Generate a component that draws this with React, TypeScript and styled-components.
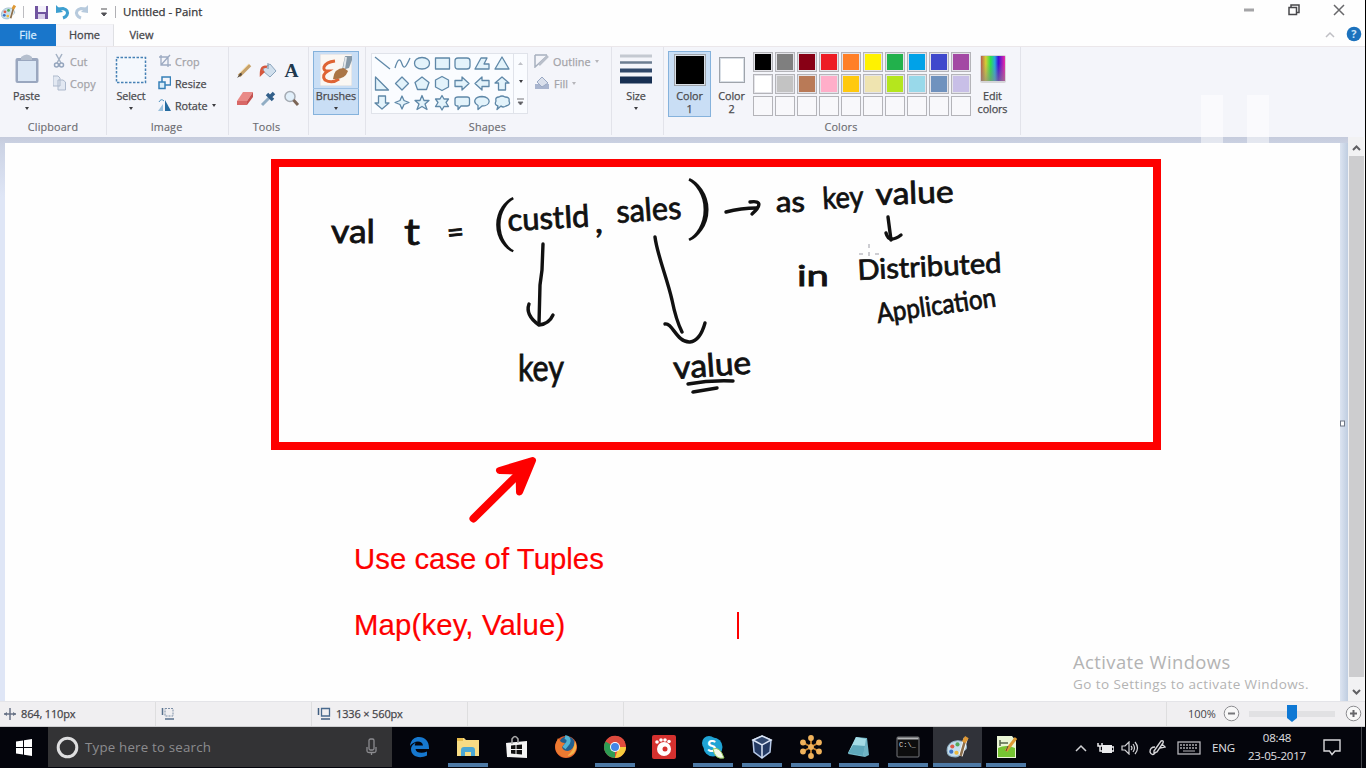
import React from "react";
import styled, { createGlobalStyle, css } from "styled-components";

const Global = createGlobalStyle`
  * { box-sizing: border-box; }
  body { margin: 0; background: #000; overflow: hidden; }
  svg { display: block; flex: none; }
`;

const ui = css`
  font-family: "Open Sans", "Noto Sans", sans-serif;
`;

const Screen = styled.div`
  ${ui}
  position: relative;
  width: 1366px;
  height: 768px;
  display: flex;
  flex-direction: column;
  background: #000;
  color: #4a4a4e;
  font-size: 11px;
  overflow: hidden;
`;
const AppWindow = styled.div`
  width: 1365px;
  height: 727px;
  display: flex;
  flex-direction: column;
  background: #fefefe;
`;
const TitleBar = styled.header`
  height: 24px;
  display: flex;
  align-items: center;
  justify-content: space-between;
  padding-right: 20px;
`;
const QuickAccess = styled.div`
  display: flex;
  align-items: center;
`;
const Title = styled.span`
  font-size: 11.4px;
  color: #37373a;
  letter-spacing: 0;
  margin-left: 5px;
  line-height: 24px;
  -webkit-text-stroke: 0.25px;
`;
const WindowButtons = styled.div`
  display: flex;
  gap: 33px;
  align-items: center;
  padding-bottom: 4px;
`;
const Tabs = styled.nav`
  height: 22px;
  display: flex;
  align-items: stretch;
`;
const Tab = styled.div<{ $w: number; $kind?: "file" | "active" }>`
  width: ${(p) => p.$w}px;
  text-align: center;
  line-height: ${(p) => (p.$kind === "active" ? 20 : 22)}px;
  font-size: 11px;
  color: ${(p) => (p.$kind === "file" ? "#d6ecff" : "#47474b")};
  background: ${(p) => (p.$kind === "file" ? "#1976cb" : p.$kind === "active" ? "#f5f5fa" : "transparent")};
  border-right: ${(p) => (p.$kind === "active" ? "1px solid #dfe0e4" : "0")};
  border-top: ${(p) => (p.$kind === "active" ? "1px solid #f0f0f3" : "0")};
  -webkit-text-stroke: 0.3px;
`;
const TabsEnd = styled.div`
  flex: 1;
  display: flex;
  justify-content: flex-end;
  align-items: center;
  gap: 11px;
  padding-right: 3px;
`;
const Ribbon = styled.section`
  height: 91px;
  display: flex;
  background: #f4f5fa;
  border-top: 1px solid #ebe7ea;
`;
const Group = styled.div<{ $w: number }>`
  width: ${(p) => p.$w}px;
  border-right: 1px solid #e2e3ea;
  display: flex;
  flex-direction: column;
  padding-top: 4px;
  height: 88px;
`;
const GroupBody = styled.div<{ $pl?: number; $gap?: number }>`
  height: 70px;
  display: flex;
  align-items: flex-start;
  padding-left: ${(p) => p.$pl ?? 0}px;
  gap: ${(p) => p.$gap ?? 0}px;
`;
const GroupLabel = styled.div<{ $shift?: number }>`
  text-align: center;
  line-height: 16px;
  font-size: 10.8px;
  letter-spacing: 0.15px;
  color: #6b6b70;
  padding-right: ${(p) => p.$shift ?? 0}px;
  -webkit-text-stroke: 0.15px;
`;
const BigButton = styled.div<{ $w: number; $selected?: boolean; $h?: number }>`
  width: ${(p) => p.$w}px;
  height: ${(p) => p.$h ?? 66}px;
  display: flex;
  flex-direction: column;
  align-items: center;
  font-size: 10.8px;
  line-height: 13px;
  letter-spacing: -0.1px;
  text-align: center;
  background: ${(p) => (p.$selected ? "#c9def5" : "transparent")};
  box-shadow: ${(p) => (p.$selected ? "inset 0 0 0 1px #85b2dc" : "none")};
  -webkit-text-stroke: 0.25px;
`;
const BigIcon = styled.div<{ $line?: boolean }>`
  height: 38px;
  width: 100%;
  display: flex;
  align-items: center;
  justify-content: center;
  border-bottom: ${(p) => (p.$line ? "1px solid #9cc0e4" : "0")};
`;
const Caret = styled.i<{ $dim?: boolean; $top?: number }>`
  display: block;
  width: 0;
  height: 0;
  border: 2.5px solid transparent;
  border-bottom: 0;
  border-top: 3px solid ${(p) => (p.$dim ? "#b5b5ba" : "#3c3c40")};
  margin-top: ${(p) => p.$top ?? 0}px;
`;
const Rows = styled.div<{ $w: number }>`
  width: ${(p) => p.$w}px;
  display: flex;
  flex-direction: column;
`;
const Row = styled.div<{ $dim?: boolean }>`
  height: 22px;
  display: flex;
  align-items: center;
  gap: 4px;
  padding-bottom: 2px;
  font-size: 10.8px;
  letter-spacing: ${(p) => (p.$dim ? 0.1 : -0.05)}px;
  color: ${(p) => (p.$dim ? "#a3a3a8" : "#4a4a4e")};
  -webkit-text-stroke: 0.25px;
`;
const ToolGrid = styled.div`
  display: grid;
  grid-template-columns: repeat(3, 23.5px);
  grid-auto-rows: 28px;
  justify-items: center;
  align-items: center;
  padding-top: 5px;
`;
const Gallery = styled.div`
  width: 157px;
  height: 61px;
  margin-top: 2px;
  display: flex;
  border: 1px solid #e0e3ea;
  background: #fafcff;
`;
const GalleryCells = styled.div`
  flex: 1;
  display: grid;
  grid-template-columns: repeat(7, 20px);
  grid-template-rows: repeat(3, 19.6px);
  place-items: center;
`;
const GalleryScroll = styled.div`
  width: 14px;
  border-left: 1px solid #e0e3ea;
  display: flex;
  flex-direction: column;
  align-items: center;
  justify-content: space-around;
`;
const Swatch = styled.div<{ $size: number; $color: string }>`
  width: ${(p) => p.$size}px;
  height: ${(p) => p.$size}px;
  background: ${(p) => p.$color};
  border: 2px solid #9fa4ab;
  outline: 1px solid #d9dfe6;
  outline-offset: -2px;
`;
const Palette = styled.div`
  display: grid;
  grid-template-columns: repeat(10, 20px);
  grid-template-rows: repeat(3, 20px);
  column-gap: 2px;
  row-gap: 2px;
  padding: 1px 0 0 1px;
`;
const Chip = styled.div<{ $color?: string }>`
  border: 1px solid #b4b4b9;
  background: ${(p) => p.$color ?? "#f8f8fb"};
  box-shadow: inset 0 0 0 1px ${(p) => (p.$color ? "#e4e4e9" : "#f8f8fb")};
`;
const Work = styled.main`
  height: 564px;
  display: flex;
  background: #c9cfdf;
`;
const Desk = styled.div`
  width: 1348px;
  padding: 6px 8px 0 5px;
  background: linear-gradient(#c5cbdc, #ccd3e4 8px, #dfe6f6 60px);
  display: flex;
`;
const Edge = styled.div`
  width: 8px;
  margin-right: -8px;
  background: linear-gradient(90deg, #dce4f1, #bfcde0);
`;
const Canvas = styled.div`
  position: relative;
  width: 1335px;
  height: 558px;
  background: #fefefe;
`;
const Ink = styled.svg`
  position: absolute;
  left: -5px;
  top: -143px;
`;
const TextBox = styled.div`
  position: absolute;
  left: 349px;
  top: 399px;
  width: 385px;
  font: 29.3px/33px "Liberation Sans", Arial, sans-serif;
  color: #fe0000;
  white-space: nowrap;
  display: flex;
  flex-direction: column;
  gap: 33px;
  -webkit-text-stroke: 0.2px;
`;
const TextLine = styled.div<{ $track?: number }>`
  display: flex;
  justify-content: space-between;
  letter-spacing: ${(p) => p.$track ?? 0}px;
`;
const TextCursor = styled.i`
  width: 2px;
  height: 27px;
  margin-top: 4px;
  background: #fe0000;
`;
const Watermark = styled.div`
  position: absolute;
  left: 1068px;
  top: 506px;
  color: #b3b3b3;
  white-space: nowrap;
`;
const WatermarkTitle = styled.div`
  font-size: 18.4px;
  line-height: 26px;
  letter-spacing: 0.42px;
`;
const WatermarkText = styled.div`
  font-size: 13.5px;
  line-height: 19px;
  letter-spacing: 0.42px;
`;
const ScrollBar = styled.div`
  width: 17px;
  background: #f2f2f3;
  display: flex;
  flex-direction: column;
  align-items: center;
  padding: 7px 0 5px;
  justify-content: space-between;
  border-right: 1px solid #fafafa;
`;
const ScrollThumb = styled.div`
  width: 15px;
  height: 521px;
  background: #cdcdcf;
  margin-bottom: 7px;
`;
const StatusBar = styled.footer`
  height: 26px;
  display: flex;
  background: #f0eff1;
  border-top: 1px solid #e4e4e8;
  border-bottom: 1px solid #cfcfd1;
`;
const StatusCell = styled.div<{ $w?: number; $pl: number }>`
  ${(p) => (p.$w ? `width: ${p.$w}px;` : "flex: 1;")}
  padding-left: ${(p) => p.$pl}px;
  padding-bottom: 1px;
  display: flex;
  align-items: center;
  gap: 5px;
  border-right: 1px solid #dededf;
  font-size: 11px;
  letter-spacing: -0.15px;
  color: #45454a;
  -webkit-text-stroke: 0.25px;
`;
const Zoom = styled.div`
  width: 198px;
  display: flex;
  align-items: center;
  padding-left: 21px;
  padding-bottom: 1px;
  font-size: 11px;
  letter-spacing: 0;
  color: #45454a;
`;
const ZoomLabel = styled.span`
  width: 35px;
`;
const Slider = styled.div`
  width: 86px;
  height: 6px;
  margin: 0 10px 0 9px;
  background: #e1e1e3;
  display: flex;
  justify-content: center;
  align-items: center;
`;
const Taskbar = styled.div`
  height: 41px;
  display: flex;
  background: #04050c;
  color: #fff;
`;
const Start = styled.div`
  width: 48px;
  padding-left: 16px;
  display: flex;
  align-items: center;
`;
const Search = styled.div`
  width: 344px;
  height: 40px;
  background: #333335;
  display: flex;
  align-items: center;
  padding: 0 15px 0 8px;
  color: #8c8c8f;
  font-size: 13.3px;
  letter-spacing: 0.2px;
`;
const SearchText = styled.span`
  flex: 1;
  padding-left: 6px;
`;
const Tasks = styled.div`
  display: flex;
  padding-left: 3px;
`;
const Task = styled.div<{ $open?: boolean; $active?: boolean }>`
  width: 48.9px;
  height: 40px;
  display: flex;
  flex-direction: column;
  align-items: center;
  justify-content: space-between;
  padding-top: 8px;
  background: ${(p) => (p.$active ? "#303239" : "transparent")};
  &::after {
    content: "";
    width: ${(p) => (p.$active ? 48 : 40)}px;
    height: 4px;
    background: ${(p) => (p.$open ? "#4d79a5" : "transparent")};
  }
`;
const Tray = styled.div`
  flex: 1;
  display: flex;
  align-items: center;
  justify-content: flex-end;
  padding-right: 4px;
`;
const TrayItem = styled.div<{ $w: number }>`
  width: ${(p) => p.$w}px;
  display: flex;
  justify-content: center;
  font-size: 11.5px;
  letter-spacing: -0.2px;
  color: #e0e0e4;
`;
const Clock = styled.div`
  width: 70px;
  margin-right: 3px;
  text-align: center;
  font-size: 11.5px;
  line-height: 18px;
  padding-bottom: 2px;
  letter-spacing: -0.2px;
  color: #e0e0e4;
`;
const TrayEnd = styled.div`
  width: 1px;
  height: 41px;
  background: #44454b;
  margin-left: 12px;
`;
const PauseMark = styled.div`
  position: absolute;
  left: 1201px;
  top: 95px;
  display: flex;
  gap: 24px;
`;
const PauseBar = styled.i`
  width: 22px;
  height: 49px;
  background: rgba(255, 255, 255, 0.5);
`;

const colors = [
  "#000000", "#7f7f7f", "#880015", "#ed1c24", "#ff7f27", "#fff200", "#22b14c", "#00a2e8", "#3f48cc", "#a349a4",
  "#ffffff", "#c3c3c3", "#b97a57", "#ffaec9", "#ffc90e", "#efe4b0", "#b5e61d", "#99d9ea", "#7092be", "#c8bfe7",
];

const shapes = [
  "M2 2L17 14", "M2 13C5 3 7 3 9 9S13 12 17 3", "M9 2.5C19 2.5 19 14 9 14S-1 2.5 9 2.5Z", "M2.5 3H16.5V14H2.5Z",
  "M5 3H14Q17 3 17 6V11Q17 14 14 14H5Q2 14 2 11V6Q2 3 5 3Z", "M2 14L8 3H14L11 9H16V14Z", "M9 2L16 14H2Z",
  "M2.5 2V15H15.5Z", "M9 2L15.5 8.5L9 15L2.5 8.5Z", "M9 2L16 7.5L13.5 14.5H4.5L2 7.5Z", "M9 1.5L15.5 5V12L9 15.5L2.5 12V5Z",
  "M2 5.5H9V2L16 8.5L9 15V11.5H2Z", "M16 5.5H9V2L2 8.5L9 15V11.5H16Z", "M5.5 15V8H2L9 2L16 8H12.5V15Z",
  "M5.5 2V9H2L9 15L16 9H12.5V2Z", "M9 2L11 6.5L16 8.5L11 10.5L9 15L7 10.5L2 8.5L7 6.5Z",
  "M9 1.5L11 6.5H16L12 10L14 15.5L9 12.5L4 15.5L6 10L2 6.5H7Z", "M9 1.5L11 5H15.5L13 8.5L15.5 12.5H11L9 16L7 12.5H2.5L5 8.5L2.5 5H7Z",
  "M5 3H14Q16.5 3 16.5 5V10Q16.5 12 14 12H8L5 15.5V12Q2 12 2 10V5Q2 3 5 3Z", "M9 2.5C19 3 18 12 9 12L5 15.5V11.5C-1 8 2 2.5 9 2.5Z",
  "M6 3Q9 1 12 3Q17 3 16 7Q18 11 13 12Q10 14 8 12L4 15.5L5 12Q1 11 3 7Q2 3 6 3Z",
];

const Svg = ({ w, h, children, vb }: { w: number; h: number; vb?: string; children: React.ReactNode }) => (
  <svg width={w} height={h} viewBox={vb ?? `0 0 ${w} ${h}`} fill="none">{children}</svg>
);

const PaletteIcon = ({ s }: { s: number }) => (
  <Svg w={s} h={s} vb="0 0 24 24">
    <path d="M2 15C2 8 9 4 16 6C22 8 22 15 17 15C14 15 16 21 10 21C5 21 2 19 2 15Z" fill="#c5dfee" stroke="#92b2c5" />
    <circle cx="7" cy="11" r="2" fill="#de5a48" /><circle cx="12" cy="9" r="2" fill="#55a85a" />
    <circle cx="6" cy="16" r="2" fill="#3d72c4" /><circle cx="11" cy="17" r="2" fill="#ecb83b" />
    <path d="M15 20L20 3" stroke="#fff" strokeWidth="4" /><path d="M15 20L19 6" stroke="#8c704e" strokeWidth="2.5" />
    <path d="M18 7L21 2" stroke="#df9834" strokeWidth="4" />
  </Svg>
);

const taskIcons = [
  { open: false, icon: <Svg w={24} h={24}><path d="M3 11C4 4 8 2 12 2C18 2 22 6 22 13V14H8.500C9 18 15 19 20 16.500V20.500C12 24.500 4 21 4 14C4 11 6 9 9 7.500C8 8.500 7.800 9.500 7.800 10.500H16C15.500 5 7 5 3 11Z" fill="#1678cf" /></Svg> },
  { open: true, icon: <Svg w={24} h={24}><path d="M1 3H8L10 5H23V21H1Z" fill="#f8dc84" /><path d="M1 3H7V6H1Z" fill="#e8bc4d" /><path d="M5 21V15Q5 12 8 12H16Q19 12 19 15V21H15V17H9V21Z" fill="#4ba8d5" /></Svg> },
  { open: false, icon: <Svg w={24} h={24}><path d="M1 8L22 6V23L2 22Z" fill="#f5f5f5" /><path d="M7 9V4Q10-1 13 4V8" stroke="#aaa" strokeWidth="1.500" /><path d="M6 10.500L10.500 10V14H6ZM11.500 10L17 9.500V14H11.500ZM6 15H10.500V19L6 18.500ZM11.500 15H17V19.500L11.500 19Z" fill="#111" /></Svg> },
  { open: false, icon: <Svg w={24} h={24}><circle cx="12" cy="12" r="11" fill="#dd5a2a" /><circle cx="13" cy="9.500" r="8" fill="#23608f" /><path d="M11 2Q16 3 14 8L10 13" stroke="#52b4d3" strokeWidth="4" /><path d="M2 8L4 3L7 7Q9 8 11 8L8 12Q9 16 14 16Q20 15 21 6Q24 13 20 19Q12 26 4 19Q0 14 2 8Z" fill="#ec7a31" /><path d="M21 6Q24 13 20 18Q17 21 13 21Q20 16 21 6Z" fill="#f5b34b" /></Svg> },
  { open: true, icon: <Svg w={24} h={24}><circle cx="12" cy="12" r="11" fill="#e04a3d" /><path d="M12 12L2.500 6.500A11 11 0 0 0 12 23Z" fill="#2e9c54" /><path d="M12 12H23A11 11 0 0 1 12 23L15 14Z" fill="#f6cc3d" /><path d="M2.500 6.500A11 11 0 0 1 22 7H12Z" fill="#dd4b3e" /><circle cx="12" cy="12" r="5" fill="#fff" /><circle cx="12" cy="12" r="4" fill="#4486e6" /></Svg> },
  { open: false, icon: <Svg w={24} h={24}><rect width="24" height="24" rx="2" fill="#d5312f" /><circle cx="12" cy="14" r="7" fill="#fff" /><circle cx="13" cy="14" r="2.500" fill="#d5312f" /><circle cx="5" cy="7" r="1.800" fill="#fff" /><circle cx="9" cy="5" r="1.800" fill="#fff" /><circle cx="13" cy="5" r="1.800" fill="#fff" /><circle cx="17" cy="6.500" r="1.800" fill="#fff" /></Svg> },
  { open: true, icon: <Svg w={24} h={24}><circle cx="8" cy="8" r="7" fill="#20a4d5" /><circle cx="12" cy="12" r="9.500" fill="#20a4d5" /><text x="6" y="17" fontFamily="Lato, sans-serif" fontWeight="700" fontSize="17" fill="#fff">S</text><path d="M12 14Q19 11 23 23Q14 25 12 14Z" fill="#f2fae8" stroke="#97c95d" /></Svg> },
  { open: true, icon: <Svg w={24} h={24}><path d="M12 1L21 5L20 17L12 23L4 17L3 5Z" fill="#243a63" stroke="#b7c9e8" strokeWidth="1.500" /><path d="M3 5L12 10L21 5L12 1ZM12 10V23" fill="#31486f" stroke="#dce6f6" strokeWidth="1.500" /></Svg> },
  { open: true, icon: <Svg w={24} h={24}><path d="M12 3V21M4 7.500L20 16.500M4 16.500L20 7.500" stroke="#c9852e" strokeWidth="1.800" />{[[12, 3], [12, 21], [4, 7.5], [20, 16.5], [4, 16.5], [20, 7.5], [12, 12]].map(([x, y]) => <circle key={`${x}-${y}`} cx={x} cy={y} r="2.900" fill="#f0b25b" />)}</Svg> },
  { open: true, icon: <Svg w={24} h={24}><path d="M9 2L20 3L22 20L18 22L1 19Z" fill="#6fb3c4" /><path d="M9 2L19 4L16 21L1 18Z" fill="#a5dce6" /><path d="M6 10L18 11L16 21L1 18Z" fill="#5fa8bb" /></Svg> },
  { open: true, icon: <Svg w={24} h={24}><rect x="1" y="2" width="22" height="20" rx="1" fill="#0d0d0e" stroke="#77797c" /><path d="M1.500 3.500H22.500" stroke="#b2b4b7" strokeWidth="2" /><text x="3" y="12" fontFamily="Liberation Mono, monospace" fontSize="7" fill="#dedede">C:\_</text></Svg> },
  { open: true, active: true, icon: <PaletteIcon s={25} /> },
  { open: true, icon: <Svg w={24} h={24}><path d="M3 1H18L22 6V23H3Z" fill="#eaf5d6" /><path d="M4 13Q12 9 21 13V22H4Z" fill="#76c433" /><path d="M6 5V11M9 8H14M6 8H9" stroke="#56664a" strokeWidth="1.500" /><path d="M12 16L22 3" stroke="#dd9b35" strokeWidth="3" /><path d="M12 16L14 11" stroke="#5c4a36" /></Svg> },
];

type Word = { t: string; x: number; y: number; w: number; s: number; r?: number; thin?: boolean };
const words: Word[] = [
  { t: "val", x: 331, y: 243, w: 44, s: 33 },
  { t: "t", x: 404, y: 245, w: 16, s: 36 },
  { t: "=", x: 448, y: 243, w: 17, s: 29, r: -6 },
  { t: "(", x: 491, y: 240, w: 24, s: 54, thin: true },
  { t: "custId", x: 508, y: 231, w: 82, s: 31, r: -3 },
  { t: ",", x: 595, y: 233, w: 8, s: 33 },
  { t: "sales", x: 617, y: 223, w: 65, s: 32, r: -4 },
  { t: ")", x: 687, y: 227, w: 28, s: 61, thin: true },
  { t: "as", x: 776, y: 212, w: 29, s: 28 },
  { t: "key", x: 823, y: 209, w: 41, s: 30, r: -3 },
  { t: "value", x: 876, y: 205, w: 78, s: 31, r: -2 },
  { t: "in", x: 797, y: 286, w: 32, s: 28 },
  { t: "Distributed", x: 858, y: 280, w: 144, s: 28, r: -3 },
  { t: "Application", x: 878, y: 323, w: 120, s: 27, r: -8 },
  { t: "key", x: 518, y: 381, w: 46, s: 36 },
  { t: "value", x: 674, y: 379, w: 78, s: 32, r: -4 },
];

const strokes = [
  "M543 244L542 270L540 285L539 324", "M529 304Q525 315 539 325Q549 324 553 315",
  "M655 237C657 254 667 278 672 300Q676 320 682 332", "M665 324C672 322 677 343 690 342Q700 341 705 323",
  "M726 212Q741 208 757 208", "M750 202C763 200 760 207 752 214",
  "M888 217L891 240", "M886 233Q889 244 901 235",
  "M688 384Q710 380 733 381", "M693 392L717 388",
];

function Drawing() {
  return (
    <Ink width="1340" height="701" viewBox="0 0 1340 701" fill="none">
      <rect x="275" y="163" width="882" height="283" stroke="#fe0000" strokeWidth="8" />
      <g fill="#111" stroke="#111">
        {words.map((o) => (
          <text key={`${o.t}${o.x}`} x={o.x} y={o.y} fontSize={o.s}
            fontFamily={o.thin ? "Roboto, sans-serif" : "Lato, sans-serif"}
            fontWeight={o.thin ? 300 : 400} strokeWidth={o.thin ? 0 : 0.8}
            textLength={o.w} lengthAdjust="spacingAndGlyphs"
            transform={`rotate(${o.r ?? 0} ${o.x} ${o.y})`}>{o.t}</text>
        ))}
      </g>
      <g stroke="#111" strokeWidth="3.400" strokeLinecap="round" strokeLinejoin="round">
        {strokes.map((d) => <path key={d} d={d} />)}
      </g>
      <path d="M859 254H863M875 254H879M869 244V248M869 252V256" stroke="#bdbdc4" strokeWidth="1.500" />
      <g stroke="#fe0000" strokeLinecap="round" strokeLinejoin="round">
        <path d="M473.500 518.500L516 476.500" strokeWidth="8" />
        <path d="M532.500 460.500L499.500 470.500L519 471L519.500 492Z" fill="#fe0000" strokeWidth="7" />
      </g>
    </Ink>
  );
}

export default function App() {
  return (
    <Screen>
      <Global />
      <AppWindow>
        <TitleBar>
          <QuickAccess>
            <PaletteIcon s={17} />
            <Svg w={17} h={14}><path d="M6.500 1V13" stroke="#bcbcc0" /></Svg>
            <Svg w={15} h={15}><path d="M1 1H14V14H1Z" fill="#7155a0" /><path d="M4 1H12V7H4Z" fill="#f3f0fa" /><path d="M4 9H11V14H4Z" fill="#d8cfea" /></Svg>
            <Svg w={22} h={16}><path d="M9 5L14 4.500Q20 6 18 11Q17 13 14 14" stroke="#3d9fd0" strokeWidth="3" /><path d="M7 1V9L14 8Z" fill="#3d9fd0" /></Svg>
            <Svg w={21} h={16}><path d="M15 5L10 4.500Q4 6 6 11Q7 13 10 14" stroke="#b7cadd" strokeWidth="3" /><path d="M17 1V9L10 8Z" fill="#b7cadd" /></Svg>
            <Svg w={26} h={14}><path d="M9 4H15M9.500 8H14.500L12 11Z" stroke="#505055" fill="#505055" /><path d="M23.500 1V13" stroke="#b0b0b4" /></Svg>
            <Title>Untitled - Paint</Title>
          </QuickAccess>
          <WindowButtons>
            <Svg w={12} h={10}><path d="M1 5H11" stroke="#a4a4a7" strokeWidth="3" /></Svg>
            <Svg w={12} h={12}><path d="M1 3.500H8.500V10.500H1ZM3 3V1H11V8.500H9" stroke="#48484b" strokeWidth="1.500" /></Svg>
            <Svg w={12} h={12}><path d="M1 1L11 11M11 1L1 11" stroke="#68686b" strokeWidth="1.500" /></Svg>
          </WindowButtons>
        </TitleBar>
        <Tabs>
          <Tab $w={56} $kind="file">File</Tab>
          <Tab $w={58} $kind="active">Home</Tab>
          <Tab $w={55}>View</Tab>
          <TabsEnd>
            <Svg w={10} h={8}><path d="M1 6L5 2L9 6" stroke="#bfbfc4" strokeWidth="1.500" /></Svg>
            <Svg w={16} h={18}><circle cx="8" cy="8" r="7.300" fill="#1c72bd" /><text x="5.300" y="12" fontFamily="Open Sans, sans-serif" fontWeight="700" fontSize="11" fill="#c9e2f7">?</text></Svg>
          </TabsEnd>
        </Tabs>
        <Ribbon>
          <Group $w={107}>
            <GroupBody $pl={6} $gap={6}>
              <BigButton $w={41}>
                <BigIcon><Svg w={26} h={32}><rect x="1.500" y="4" width="23" height="25" rx="2" fill="#9aa7bf" /><rect x="4" y="7" width="18" height="20" fill="#dbe7f5" /><path d="M7 3Q13-2 18 3V6H7Z" fill="#b5bfce" /></Svg></BigIcon>
                Paste<Caret $top={5} />
              </BigButton>
              <Rows $w={50}>
                <Row $dim><Svg w={13} h={16}><path d="M3 1L8 10M9 1L4 10" stroke="#a4b1c4" strokeWidth="1.500" /><circle cx="3.500" cy="12" r="2" stroke="#94a5bd" strokeWidth="1.500" /><circle cx="8.500" cy="12" r="2" stroke="#94a5bd" strokeWidth="1.500" /></Svg>Cut</Row>
                <Row $dim><Svg w={13} h={16}><path d="M0 1H5L7 3V11H0ZM5 5H10L12.500 7V15H5Z" fill="#e2e8f2" stroke="#adb9cc" /></Svg>Copy</Row>
              </Rows>
            </GroupBody>
            <GroupLabel>Clipboard</GroupLabel>
          </Group>
          <Group $w={122}>
            <GroupBody $pl={3} $gap={6}>
              <BigButton $w={42}>
                <BigIcon><Svg w={32} h={28}><rect x="1.500" y="1.500" width="29" height="25" fill="#f4f8fd" stroke="#4681b5" strokeWidth="1.500" strokeDasharray="2.500 1.500" /></Svg></BigIcon>
                Select<Caret $top={5} />
              </BigButton>
              <Rows $w={65}>
                <Row $dim><Svg w={13} h={14}><path d="M3 1V11H13M1 3H10V13M3 11L12 1" stroke="#9daac2" strokeWidth="1.300" /></Svg>Crop</Row>
                <Row><Svg w={13} h={14}><path d="M4 1H12.500V9H4Z" stroke="#3680b8" strokeWidth="1.500" /><path d="M1 6H7V12.500H1Z" fill="#d9edf9" stroke="#3680b8" strokeWidth="1.500" /></Svg>Resize</Row>
                <Row><Svg w={13} h={14}><path d="M7 2L13 13H7Z" fill="#256ba0" /><path d="M5 6V13H0Z" fill="#9ac0dc" /><path d="M1 4Q3 0 6 3" stroke="#4c91c0" /></Svg>Rotate <Caret /></Row>
              </Rows>
            </GroupBody>
            <GroupLabel $shift={2}>Image</GroupLabel>
          </Group>
          <Group $w={80}>
            <GroupBody $pl={4}>
              <ToolGrid>
                <Svg w={17} h={17}><path d="M3 14L14 3" stroke="#c7a26b" strokeWidth="3.500" /><path d="M1 16L5 10L6 13Z" fill="#55493c" /><path d="M4 11L13 2" stroke="#f0d49b" /></Svg>
                <Svg w={18} h={17}><path d="M5 6L11 2L17 9L11 15L4 9Z" fill="#d0dfed" stroke="#8ba5bd" /><path d="M8 5Q2 3 2 12L5 9" stroke="#d6583e" strokeWidth="2.500" /><path d="M9 1V7" stroke="#768fa4" /></Svg>
                <Svg w={15} h={15}><text x="0.500" y="13.500" textLength="14" lengthAdjust="spacingAndGlyphs" fontFamily="Liberation Serif, serif" fontWeight="700" fontSize="19" fill="#20384e">A</text></Svg>
                <Svg w={18} h={16}><path d="M1 11L7 2H17L11 11Z" fill="#e98a87" /><path d="M1 11H11V15H1Z" fill="#d86766" /><path d="M11 11L17 2V7L11 15Z" fill="#c4514f" /></Svg>
                <Svg w={17} h={17}><path d="M2 15L10 7" stroke="#91adc4" strokeWidth="3" /><path d="M7 4L13 10M10 7L14 3" stroke="#315f8a" strokeWidth="3.500" /></Svg>
                <Svg w={17} h={17}><circle cx="7" cy="6.500" r="5" fill="#e1effa" stroke="#a5abb3" strokeWidth="1.500" /><path d="M10.500 10L15 15" stroke="#7b6556" strokeWidth="3" /></Svg>
              </ToolGrid>
            </GroupBody>
            <GroupLabel $shift={4}>Tools</GroupLabel>
          </Group>
          <Group $w={57}>
            <GroupBody $pl={4}>
              <BigButton $w={46} $h={64} $selected>
                <BigIcon $line><Svg w={32} h={32}><rect width="32" height="32" fill="#faf7f3" stroke="#d5d8df" /><path d="M15 7Q6 8 4 13Q3 17 8 17Q1 21 5 26Q12 30 19 25" stroke="#df6434" strokeWidth="3" /><path d="M25 2L22 16L29 14L32 6V2Z" fill="#8799a7" /><path d="M26 3L24 15" stroke="#e2e7eb" strokeWidth="2" /><path d="M24 14Q14 14 13 25Q25 26 28 17Z" fill="#aa7545" /></Svg></BigIcon>
                Brushes<Caret $top={5} />
              </BigButton>
            </GroupBody>
          </Group>
          <Group $w={246}>
            <GroupBody $pl={5} $gap={6}>
              <Gallery>
                <GalleryCells>{shapes.map((d) => <Svg key={d} w={18} h={17}><path d={d} fill={d.startsWith("M2 2L17") || d.includes("C5 3") ? "none" : "#e3f3fb"} stroke="#5f88a8" strokeWidth="1.300" strokeLinejoin="round" /></Svg>)}</GalleryCells>
                <GalleryScroll><Svg w={5} h={3}><path d="M0 3H5L2.500 0Z" fill="#bfc1c7" /></Svg><Caret /><Svg w={7} h={8}><path d="M0 1H7M1 4H6L3.500 7Z" fill="#55555a" stroke="#77777b" /></Svg></GalleryScroll>
              </Gallery>
              <Rows $w={70}>
                <Row $dim><Svg w={15} h={14}><path d="M1 1H13M1 1V13L13 2" stroke="#a7b0bf" strokeWidth="1.500" /><path d="M5 11L14 2" stroke="#b9bfca" strokeWidth="2.500" /></Svg>Outline <Caret $dim /></Row>
                <Row $dim><Svg w={16} h={14}><path d="M1 8H15V13H1Z" fill="#a9b5cf" /><path d="M8 1L14 7L8 11L3 6Z" fill="#dae0ec" stroke="#9aa9c4" /></Svg>Fill <Caret $dim /></Row>
              </Rows>
            </GroupBody>
            <GroupLabel $shift={2}>Shapes</GroupLabel>
          </Group>
          <Group $w={52}>
            <GroupBody $pl={3}>
              <BigButton $w={42}>
                <BigIcon><Svg w={32} h={32}><path d="M0 2H32" stroke="#c4c9d1" strokeWidth="3" /><path d="M0 8.500H32" stroke="#6c7d91" strokeWidth="2.500" /><path d="M0 16.500H32" stroke="#30486a" strokeWidth="4" /><path d="M0 26H32" stroke="#172f52" strokeWidth="7" /></Svg></BigIcon>
                Size<Caret $top={5} />
              </BigButton>
            </GroupBody>
          </Group>
          <Group $w={357}>
            <GroupBody $pl={4}>
              <BigButton $w={43} $selected><BigIcon><Swatch $size={32} $color="#000" /></BigIcon>Color<br />1</BigButton>
              <BigButton $w={41}><BigIcon><Swatch $size={26} $color="#fff" /></BigIcon>Color<br />2</BigButton>
              <Palette>{Array.from({ length: 30 }, (_, i) => <Chip key={i} $color={colors[i]} />)}</Palette>
              <BigButton $w={43}>
                <BigIcon><Svg w={28} h={32}><defs><linearGradient id="hue"><stop offset="0" stopColor="#b85c4d" /><stop offset=".2" stopColor="#d5cf35" /><stop offset=".4" stopColor="#2ce04a" /><stop offset=".58" stopColor="#28a7df" /><stop offset=".72" stopColor="#3a10d7" /><stop offset="1" stopColor="#ed2aa6" /></linearGradient><linearGradient id="shade" x2="0" y2="1"><stop offset=".3" stopColor="#888" stopOpacity="0" /><stop offset="1" stopColor="#888" stopOpacity=".6" /></linearGradient></defs><rect x="1" y="1" width="26" height="28" rx="2" fill="#d5d5d8" /><rect x="2" y="2" width="24" height="25" fill="url(#hue)" /><rect x="2" y="2" width="24" height="25" fill="url(#shade)" /></Svg></BigIcon>
                Edit<br />colors
              </BigButton>
            </GroupBody>
            <GroupLabel $shift={2}>Colors</GroupLabel>
          </Group>
        </Ribbon>
        <Work>
          <Desk>
            <Canvas>
              <Drawing />
              <TextBox>
                <TextLine $track={0.04}>Use case of Tuples</TextLine>
                <TextLine $track={0.16}>Map(key, Value)<TextCursor /></TextLine>
              </TextBox>
              <Watermark>
                <WatermarkTitle>Activate Windows</WatermarkTitle>
                <WatermarkText>Go to Settings to activate Windows.</WatermarkText>
              </Watermark>
            </Canvas>
            <Edge><Svg w={8} h={290}><rect x="0.500" y="278" width="4" height="5" fill="#fff" stroke="#6e7785" /></Svg></Edge>
          </Desk>
          <ScrollBar>
            <Svg w={9} h={8}><path d="M1 6L4.500 2.500L8 6" stroke="#606063" strokeWidth="2" /></Svg>
            <ScrollThumb />
            <Svg w={9} h={8}><path d="M1 2L4.500 5.500L8 2" stroke="#606063" strokeWidth="2" /></Svg>
          </ScrollBar>
        </Work>
        <StatusBar>
          <StatusCell $w={156} $pl={4}><Svg w={12} h={12}><path d="M0 6H12M6 0V12" stroke="#687386" strokeWidth="1.500" /><path d="M0 6L3 4V8ZM12 6L9 4V8Z" fill="#687386" /></Svg>864, 110px</StatusCell>
          <StatusCell $w={156} $pl={5}><Svg w={14} h={13}><path d="M1.500 1V8M4 12H13" stroke="#58718d" strokeWidth="1.500" /><path d="M4 1.500H12V9H4Z" stroke="#7d8fa6" strokeDasharray="2 1" /></Svg></StatusCell>
          <StatusCell $w={156} $pl={5}><Svg w={14} h={13}><path d="M1.500 1V8M4 12H13" stroke="#405e80" strokeWidth="1.500" /><path d="M4.500 1.500H12.500V9H4.500Z" stroke="#48698d" strokeWidth="1.300" /></Svg>1336 × 560px</StatusCell>
          <StatusCell $w={156} $pl={0} />
          <StatusCell $pl={0} />
          <Zoom>
            <ZoomLabel>100%</ZoomLabel>
            <Svg w={17} h={17}><circle cx="8.500" cy="8.500" r="7.300" fill="#f8f8f8" stroke="#8c8c90" /><path d="M5 8.500H12" stroke="#77777a" strokeWidth="2" /></Svg>
            <Slider><Svg w={10} h={17}><path d="M0 0H10V13L5 17L0 13Z" fill="#0e78d4" /></Svg></Slider>
            <Svg w={17} h={17}><circle cx="8.500" cy="8.500" r="7.300" fill="#f8f8f8" stroke="#8c8c90" /><path d="M5 8.500H12M8.500 5V12" stroke="#66666a" strokeWidth="2" /></Svg>
          </Zoom>
        </StatusBar>
      </AppWindow>
      <Taskbar>
        <Start><Svg w={16} h={17}><path d="M0 2.500L7 1.500V8H0ZM8 1.300L16 0V8H8ZM0 9H7V15.500L0 14.500ZM8 9H16V17L8 15.700Z" fill="#fff" /></Svg></Start>
        <Search>
          <Svg w={23} h={23}><circle cx="11.500" cy="11.500" r="9.300" stroke="#dededf" strokeWidth="3" /></Svg>
          <SearchText>Type here to search</SearchText>
          <Svg w={11} h={18}><rect x="3" y="1" width="5" height="11" rx="1.500" stroke="#8c8c90" strokeWidth="1.300" /><path d="M1 9V13Q1 14.500 3 14.500H8Q10 14.500 10 13V9M5.500 14.500V17" stroke="#8c8c90" strokeWidth="1.300" /></Svg>
        </Search>
        <Tasks>{taskIcons.map((t, i) => <Task key={i} $open={t.open} $active={t.active}>{t.icon}</Task>)}</Tasks>
        <Tray>
          <TrayItem $w={24}><Svg w={12} h={8}><path d="M1 7L6 2L11 7" stroke="#d2d2d5" strokeWidth="1.500" /></Svg></TrayItem>
          <TrayItem $w={24}><Svg w={17} h={12}><path d="M5 3H15V11H5Z" fill="#ececee" /><path d="M15 5H17V9H15M1 1V4H5V1M3 4V9H5" stroke="#ececee" strokeWidth="1.500" /></Svg></TrayItem>
          <TrayItem $w={25}><Svg w={18} h={14}><path d="M1 5H4L8 1V13L4 9H1Z" stroke="#d5d5d8" strokeWidth="1.200" /><path d="M10 5Q12 7 10 9M12 3Q15 7 12 11M14 1Q19 7 14 13" stroke="#d5d5d8" strokeWidth="1.200" /></Svg></TrayItem>
          <TrayItem $w={31}><Svg w={17} h={18}><path d="M5 12L12 2Q15 1 14 4L8 13L5 14ZM6 8Q1 8 1 13Q3 18 7 13M13 5L16 8L11 9" stroke="#d5d5d8" strokeWidth="1.400" /></Svg></TrayItem>
          <TrayItem $w={32}><Svg w={24} h={14}><rect x="1" y="1" width="22" height="12" stroke="#b6b6ba" strokeWidth="1.300" /><path d="M3 4H21M3 7H21" stroke="#aaaaae" strokeWidth="1.500" strokeDasharray="2 1" /><path d="M6 10H18" stroke="#b6b6ba" /></Svg></TrayItem>
          <TrayItem $w={37}>ENG</TrayItem>
          <Clock>08:48<br />23-05-2017</Clock>
          <TrayItem $w={34}><Svg w={18} h={17}><path d="M1 1H17V12H12L9 15.500L6.500 12H1Z" stroke="#d7d7da" strokeWidth="1.400" /></Svg></TrayItem>
          <TrayEnd />
        </Tray>
      </Taskbar>
      <PauseMark><PauseBar /><PauseBar /></PauseMark>
    </Screen>
  );
}
